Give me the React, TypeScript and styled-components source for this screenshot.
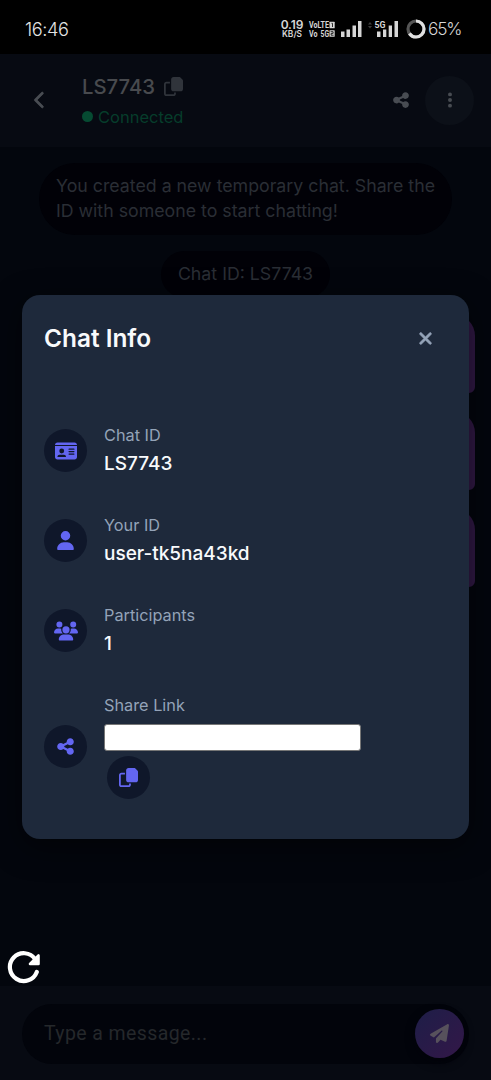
import React from "react";
import styled, { createGlobalStyle } from "styled-components";
import {
  FaChevronLeft, FaShareNodes, FaEllipsisVertical, FaXmark, FaIdCard, FaUser, FaUsers, FaPaperPlane,
} from "react-icons/fa6";

const GlobalStyle = createGlobalStyle`
  * { box-sizing: border-box; }
  body { margin: 0; background: #03060d; font-family: Inter, "Liberation Sans", sans-serif; }
  button { border: 0; padding: 0; margin: 0; background: none; color: inherit; font: inherit; }
  svg { display: block; flex: none; }
`;

const Screen = styled.div`
  position: relative; width: 491px; height: 1080px; overflow: hidden;
  display: flex; flex-direction: column; background: #03060d;
`;

const StatusBar = styled.div`
  height: 54px; flex: none; background: #000; color: #d6d6d6;
  display: flex; align-items: center; padding: 3px 30px 0 25px;
`;
const Clock = styled.span`
  flex: 1; font-size: 18.2px; font-weight: 300; letter-spacing: -0.4px; line-height: 22px; color: #e4e4e4;
`;
const Indicator = styled.div<{ $w: number; $ml?: number }>`
  width: ${(p) => p.$w}px; margin-left: ${(p) => p.$ml ?? 0}px; flex: none; white-space: nowrap;
`;
const Rate = styled.div`
  display: flex; flex-direction: column; align-items: center; font-weight: 600;
`;
const RateValue = styled.span`font-size: 12px; line-height: 10px; letter-spacing: -0.1px;`;
const RateUnit = styled.span`font-size: 8.4px; line-height: 8px;`;
const Battery = styled.span`
  font-size: 17.3px; font-weight: 300; letter-spacing: -1.2px; line-height: 22px; margin-left: 2px; width: 33px;
`;

const Header = styled.header`
  height: 93px; flex: none; background: #070a12; display: flex; align-items: center; padding: 0 17px 1px 31px;
  color: #484c52;
`;
const HeaderInfo = styled.div`
  flex: 1; margin-left: 33px; padding-top: 2px; display: flex; flex-direction: column; gap: 7px;
`;
const TitleRow = styled.div`
  display: flex; align-items: center; gap: 9px; font-size: 20.3px; line-height: 24px; font-weight: 500; color: #484a4e;
`;
const CopyTint = styled.span`color: #30343b;`;
const Status = styled.div`
  display: flex; align-items: center; gap: 5px; font-size: 16.5px; line-height: 22px; color: #063d2b;
`;
const Dot = styled.span`width: 11px; height: 11px; border-radius: 50%; background: #064b32;`;
const HeaderButton = styled.button<{ $filled?: boolean }>`
  width: 49px; height: 49px; border-radius: 50%; display: grid; place-items: center;
  background: ${(p) => (p.$filled ? "#0c1018" : "transparent")};
`;

const Messages = styled.main`
  flex: 1; display: flex; flex-direction: column; align-items: center; padding: 16px 16px 0;
`;
const Notice = styled.div`
  background: #010107; color: #2a2e35; border-radius: 36px; padding: 10px 17px 12px;
  font-size: 17.75px; line-height: 25px; margin-bottom: 16px; white-space: nowrap;
`;
const Sent = styled.div`
  align-self: flex-end; width: 160px; height: 79px; margin-bottom: 18px; background: #2f1843;
  border-radius: 22px 22px 6px 22px; flex: none;
`;

const Composer = styled.footer`
  height: 94px; flex: none; background: #070a12; padding: 18px 22px 16px;
`;
const InputShell = styled.div`
  height: 60px; border-radius: 30px; background: #02040b; display: flex; align-items: center;
  justify-content: space-between; padding: 0 5px 1px 22px;
  color: #25282b; font-family: Roboto, sans-serif; font-size: 19.5px; letter-spacing: 0.4px;
`;
const SendButton = styled.button`
  width: 49px; height: 49px; border-radius: 50%; display: grid; place-items: center; color: #57515c;
  background: linear-gradient(135deg, #1e1e48, #331748); box-shadow: 0 4px 10px #02030a;
`;

const Modal = styled.section`
  position: absolute; left: 22px; top: 295px; width: 447px; height: 544px; border-radius: 18px;
  background: #1e293b; box-shadow: 0 8px 30px rgba(0, 0, 0, 0.5); padding: 21px 22px;
`;
const ModalHeader = styled.div`
  display: flex; justify-content: space-between; align-items: center; height: 45px; margin-bottom: 62px;
`;
const ModalTitle = styled.h2`
  margin: 0; padding-bottom: 1px; font-size: 24.4px; line-height: 30px; font-weight: 600; color: #f8fafc;
`;
const Close = styled.button`
  width: 43px; height: 43px; display: grid; place-items: center; color: #94a3b8;
`;
const Details = styled.div`display: flex; flex-direction: column; gap: 35px;`;
const Row = styled.div`display: flex; align-items: center; gap: 17px;`;
const IconCircle = styled.span`
  width: 43px; height: 43px; flex: none; border-radius: 50%; background: #0f172a; color: #6366f1;
  display: grid; place-items: center;
`;
const Field = styled.div`display: flex; flex-direction: column; gap: 3px;`;
const Label = styled.div`font-size: 16.3px; line-height: 24px; color: #94a3b8;`;
const Value = styled.div`font-size: 19px; line-height: 28px; font-weight: 500; color: #f8fafc;`;
const LinkInput = styled.input`
  display: block; width: 257px; height: 27px; padding: 0; margin: 4px 0 1px; background: #fff;
  border: 1.5px solid #767676; border-radius: 3px; outline: 0;
`;
const CopySlot = styled.button`margin-left: 2px; width: 44px; height: 44px; display: grid; place-items: center;`;

const Reload = styled.button`position: absolute; left: 7px; top: 950px; color: #fff;`;

const CopyIcon = ({ size }: { size: number }) => (
  <svg width={size} height={size} viewBox="0 0 512 512" fill="currentColor">
    <path d="M256 0H410c10 0 18 3 25 10l67 67c7 7 10 15 10 25V320c0 35-29 64-64 64H256c-35 0-64-29-64-64V64c0-35 29-64 64-64z" />
    <path d="M64 128h96v48H64c-9 0-16 7-16 16v256c0 9 7 16 16 16h192c9 0 16-7 16-16v-32h48v32c0 35-29 64-64 64H64c-35 0-64-29-64-64V192c0-35 29-64 64-64z" />
  </svg>
);

const ReloadIcon = () => (
  <svg width="34" height="34" viewBox="0 0 34 34" fill="none" stroke="currentColor" strokeLinecap="round" strokeLinejoin="round">
    <path d="M28.200 9.200A13.900 13.900 0 1 0 29.800 22" strokeWidth="4.200" />
    <path d="M31.500 5.500v8.500h-8.500z" fill="currentColor" strokeWidth="2.600" />
  </svg>
);

const VoiceIcon = () => (
  <svg width="27" height="18" viewBox="0 0 27 18" fill="#d6d6d6" fontFamily="Roboto" fontWeight="700" fontSize="8.6">
    <text x="1" y="8" textLength="20" lengthAdjust="spacingAndGlyphs">VoLTE</text>
    <text x="1" y="16.500" textLength="8.500" lengthAdjust="spacingAndGlyphs">Vo</text>
    <text x="12.500" y="16.500" textLength="8.500" lengthAdjust="spacingAndGlyphs">5G</text>
    <rect x="21.500" y="1.700" width="5.200" height="6.500" rx="0.500" />
    <rect x="21.500" y="10.200" width="5.200" height="6.500" rx="0.500" />
    <path d="M23.500 3.300h1v3.700M22.600 11.700h2.500v1.700h-2v1.800h2.500" fill="none" stroke="#000" strokeWidth="0.800" />
  </svg>
);

const Signal = ({ label }: { label?: boolean }) => (
  <svg width={label ? 30 : 21} height="18" viewBox={label ? "0 0 30 18" : "0 0 21 18"} fill="#d6d6d6">
    {label ? (
      <>
        <path d="M0 4.500l2-2.500 2 2.500zM0 6l2 2.500L4 6z" fill="#3c3c3c" />
        <text x="6.500" y="8" fontSize="9.500" fontWeight="700" fontFamily="Roboto" textLength="11" lengthAdjust="spacingAndGlyphs">5G</text>
        <path d="M9 11.500h3.500v5.500H9zM15 9.500h3.300V17H15zM20.700 5.500h3.300V17h-3.300zM26.500 1H30v16h-3.500z" />
      </>
    ) : (
      <path d="M0 11.500h3.500v5.500H0zM5.500 9.500H9V17H5.500zM11.500 5.500H15V17h-3.500zM17 1h3.500v16H17z" />
    )}
  </svg>
);

const BatteryRing = () => (
  <svg width="20" height="20" viewBox="0 0 20 20" fill="none" strokeWidth="3.200">
    <circle cx="10" cy="10" r="8" stroke="#555" />
    <circle cx="10" cy="10" r="8" stroke="#e0e0e0" strokeDasharray="32.700 50.270" transform="rotate(-90 10 10)" />
  </svg>
);

const details = [
  { icon: <FaIdCard size={22} />, label: "Chat ID", value: "LS7743" },
  { icon: <FaUser size={19} />, label: "Your ID", value: "user-tk5na43kd" },
  { icon: <FaUsers size={24} />, label: "Participants", value: "1" },
];

export default function App() {
  return (
    <>
      <GlobalStyle />
      <Screen>
        <StatusBar>
          <Clock>16:46</Clock>
          <Indicator $w={24}>
            <Rate>
              <RateValue>0.19</RateValue>
              <RateUnit>KB/S</RateUnit>
            </Rate>
          </Indicator>
          <Indicator $w={27} $ml={4}><VoiceIcon /></Indicator>
          <Indicator $w={21} $ml={6}><Signal /></Indicator>
          <Indicator $w={30} $ml={6}><Signal label /></Indicator>
          <Indicator $w={20} $ml={8}><BatteryRing /></Indicator>
          <Battery>65%</Battery>
        </StatusBar>

        <Header>
          <FaChevronLeft size={18} strokeWidth={22} />
          <HeaderInfo>
            <TitleRow>LS7743<CopyTint><CopyIcon size={19} /></CopyTint></TitleRow>
            <Status><Dot />Connected</Status>
          </HeaderInfo>
          <HeaderButton><FaShareNodes size={18} /></HeaderButton>
          <HeaderButton $filled><FaEllipsisVertical size={18} /></HeaderButton>
        </Header>

        <Messages>
          <Notice>You created a new temporary chat. Share the<br />ID with someone to start chatting!</Notice>
          <Notice>Chat ID: LS7743</Notice>
          <Sent /><Sent /><Sent />
        </Messages>

        <Composer>
          <InputShell>
            Type a message...
            <SendButton><FaPaperPlane size={19} /></SendButton>
          </InputShell>
        </Composer>

        <Modal>
          <ModalHeader>
            <ModalTitle>Chat Info</ModalTitle>
            <Close><FaXmark size={19} strokeWidth={14} /></Close>
          </ModalHeader>
          <Details>
            {details.map((d) => (
              <Row key={d.label}>
                <IconCircle>{d.icon}</IconCircle>
                <Field><Label>{d.label}</Label><Value>{d.value}</Value></Field>
              </Row>
            ))}
            <Row>
              <IconCircle><FaShareNodes size={19} /></IconCircle>
              <Field>
                <Label>Share Link</Label>
                <LinkInput readOnly />
                <CopySlot><IconCircle><CopyIcon size={19} /></IconCircle></CopySlot>
              </Field>
            </Row>
          </Details>
        </Modal>
        <Reload><ReloadIcon /></Reload>
      </Screen>
    </>
  );
}
